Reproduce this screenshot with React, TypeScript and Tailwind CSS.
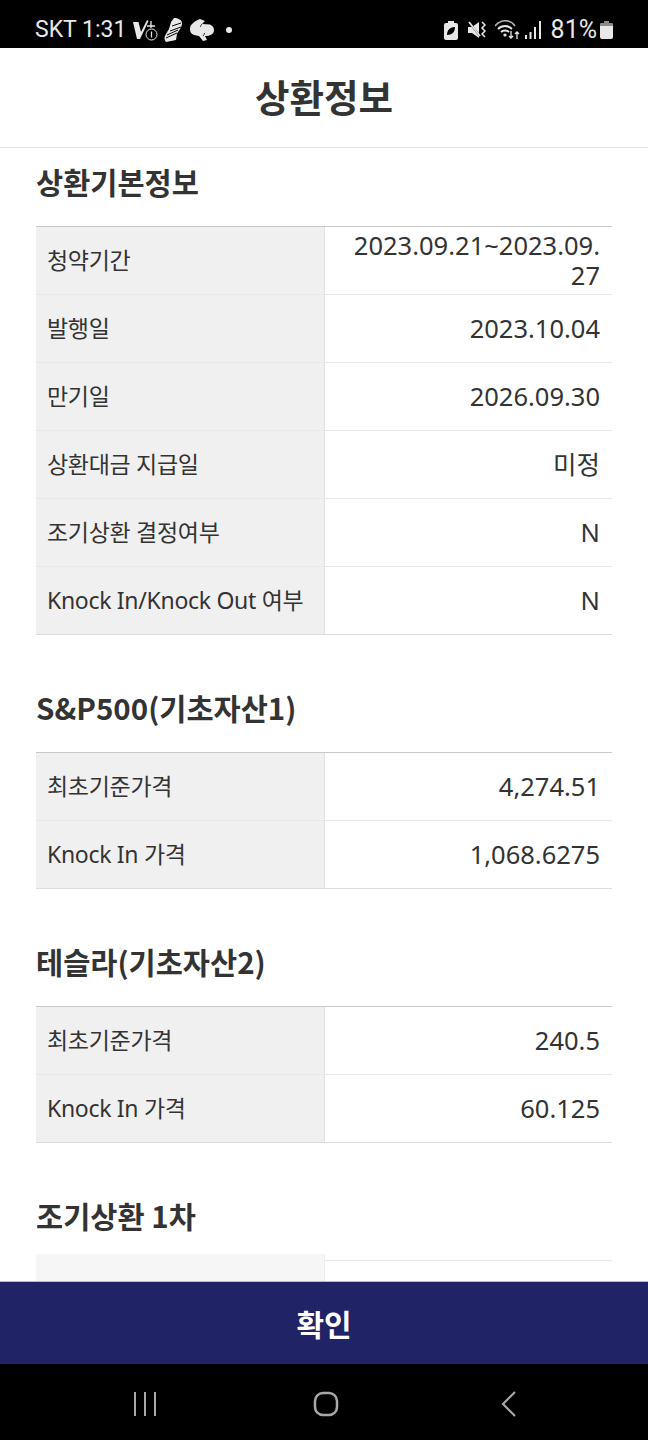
import React from 'react'

type Row = { label: string; value: string }

const basicRows: Row[] = [
  { label: '청약기간', value: '2023.09.21~2023.09.27' },
  { label: '발행일', value: '2023.10.04' },
  { label: '만기일', value: '2026.09.30' },
  { label: '상환대금 지급일', value: '미정' },
  { label: '조기상환 결정여부', value: 'N' },
  { label: 'Knock In/Knock Out 여부', value: 'N' },
]

const spRows: Row[] = [
  { label: '최초기준가격', value: '4,274.51' },
  { label: 'Knock In 가격', value: '1,068.6275' },
]

const teslaRows: Row[] = [
  { label: '최초기준가격', value: '240.5' },
  { label: 'Knock In 가격', value: '60.125' },
]

function StatusBar() {
  return (
    <div className="h-12 shrink-0 bg-black text-[#e8e8e8] flex items-center justify-between pt-[12px] pl-[35px] pr-[35px] font-['Roboto',sans-serif]">
      <div className="flex items-center text-[23px]">
        <span>SKT 1:31</span>
        {/* left notification icons */}
        <svg className="ml-[6px]" width="26" height="22" viewBox="0 0 26 22" fill="none" stroke="#e8e8e8">
          <path d="M1 3h5.500l2.500 10L15 1l1.500 1L8 20H5z" fill="#e8e8e8" stroke="none" />
          <path d="M15 7h8M19 2v7" strokeWidth="1.300" />
          <circle cx="19.500" cy="15.500" r="5.500" strokeWidth="1" fill="#000" />
          <path d="M19.500 12.500v6" strokeWidth="1.200" />
        </svg>
        <svg className="ml-[5px]" width="20" height="24" viewBox="0 0 20 24" fill="#e8e8e8">
          <path d="M11 0c4 0 8 2 8 5 0 5-4 8-5 11l-1 6-10 2c-2-2-2-5 0-8l3-5 2-7z" />
          <path d="M3 20l11-5M4 17l11-5M7 13l11-4M9 8l9-3" stroke="#000" strokeWidth="1" fill="none" />
        </svg>
        <svg className="ml-[7px]" width="24" height="22" viewBox="0 0 24 22" fill="#e8e8e8">
          <path d="M10 0l5 2-3 3 8 .5c3 1.500 4 3.500 4 5.500 0 4-4 6-9 6l2 4-4 1-4-5-5-1c-3-1-4-3-4-6 0-5 5-8 10-10z" />
          <path d="M12 5c-1 1-1.500 2-1.500 3M13 17c1-1 1.500-2 1.500-3" stroke="#000" strokeWidth="0.800" fill="none" />
        </svg>
        <span className="ml-[12px] w-[6px] h-[6px] rounded-full bg-[#e8e8e8]" />
      </div>
      <div className="flex items-center text-[25px]">
        <svg width="14" height="19" viewBox="0 0 14 19" fill="#e8e8e8">
          <path d="M4 0h6v2h2a2 2 0 0 1 2 2v13a2 2 0 0 1-2 2H2a2 2 0 0 1-2-2V4a2 2 0 0 1 2-2h2z" />
          <path d="M3 14c0-5 3-8 8-8 0 5-3 8-8 8z" fill="#000" />
        </svg>
        <svg className="ml-[10px]" width="18" height="18" viewBox="0 0 18 18" fill="#e8e8e8">
          <path d="M0 6h4l7-5v16l-7-5H0z" />
          <path d="M0 0l12 15" stroke="#000" strokeWidth="2" />
          <path d="M1 1l11 14" stroke="#e8e8e8" strokeWidth="1.800" />
          <path d="M14 1l3 3-3 3 3 3-3 3 3 3" stroke="#e8e8e8" strokeWidth="1.500" fill="none" />
        </svg>
        <svg className="ml-[9px]" width="25" height="20" viewBox="0 0 25 20" fill="none" stroke="#e8e8e8">
          <path d="M0 6c6-7 15-7 20 0" strokeWidth="1.600" stroke="#b0b0b0" />
          <path d="M3 9c4-4 10-4 14 0" strokeWidth="1.800" />
          <path d="M6 12c2-2 6-2 8 0" strokeWidth="1.800" />
          <circle cx="10" cy="15" r="1.600" fill="#e8e8e8" stroke="none" />
          <path d="M16 11v7m-2-2l2 2 2-2M22 19v-7m-2 2l2-2 2 2" strokeWidth="1.300" />
        </svg>
        <svg className="ml-[5px]" width="16" height="18" viewBox="0 0 16 18" fill="#e8e8e8">
          <rect x="0" y="14" width="2" height="4" />
          <rect x="4.500" y="11" width="2" height="7" />
          <rect x="9" y="6" width="2" height="12" />
          <rect x="14" y="0" width="2" height="18" />
        </svg>
        <span className="ml-[10px]">81%</span>
        <svg className="ml-[3px]" width="13" height="18" viewBox="0 0 13 18" fill="#e8e8e8">
          <path d="M4 0h5v2h2a2 2 0 0 1 2 2v12a2 2 0 0 1-2 2H2a2 2 0 0 1-2-2V4a2 2 0 0 1 2-2h2z" />
          <path d="M0 4a2 2 0 0 1 2-2h2V0h5v2h2a2 2 0 0 1 2 2v1H0z" fill="#8a8a8a" />
        </svg>
      </div>
    </div>
  )
}

function InfoTable({ rows }: { rows: Row[] }) {
  return (
    <div className="border-t border-b border-t-[#c8c8c8] border-b-[#dcdcdc]">
      {rows.map((row, i) => (
        <div
          key={row.label}
          className={i > 0 ? 'flex h-[68px] border-t border-[#e8e8e8]' : 'flex h-[67px]'}
        >
          <div className="w-[289px] shrink-0 bg-[#f0f0f0] border-r border-[#e2e2e2] flex items-center pl-[11px] text-[23px] tracking-[-0.3px] text-[#333]">
            {row.label}
          </div>
          <div className="flex-1 min-w-0 flex items-center justify-end pb-[2px] pl-[24px] pr-[12px] text-right text-[25.500px] leading-[30px] text-[#333] break-all">
            {row.value}
          </div>
        </div>
      ))}
    </div>
  )
}

function Section({ title, rows }: { title: string; rows: Row[] }) {
  return (
    <section className="mb-[39px]">
      <h2 className="h-[78px] pt-[13px] font-['Noto_Sans_CJK_KR',sans-serif] text-[29.500px] leading-[40px] font-bold text-[#333]">{title}</h2>
      <InfoTable rows={rows} />
    </section>
  )
}

export default function App() {
  return (
    <div className="h-[1440px] w-[648px] flex flex-col overflow-hidden bg-white font-['Noto_Sans','Noto_Sans_CJK_KR',sans-serif]">
      <StatusBar />

      <header className="h-[100px] shrink-0 border-b border-[#e4e4e4] flex items-center justify-center">
        <h1 className="font-['Noto_Sans_CJK_KR',sans-serif] text-[37.500px] font-bold text-[#333] -mt-[2px]">상환정보</h1>
      </header>

      <main className="flex-1 min-h-0 overflow-hidden px-9">
        <Section title="상환기본정보" rows={basicRows} />
        <Section title="S&P500(기초자산1)" rows={spRows} />
        <Section title="테슬라(기초자산2)" rows={teslaRows} />
        <section>
          <h2 className="h-[72px] pt-[13px] font-['Noto_Sans_CJK_KR',sans-serif] text-[29.500px] leading-[40px] font-bold text-[#333]">조기상환 1차</h2>
          <div className="flex h-[60px]">
            <div className="w-[289px] shrink-0 bg-[#f6f6f6] border-r border-[#eee]" />
            <div className="flex-1 mt-[6px] border-t border-[#e8e8e8]" />
          </div>
        </section>
      </main>

      <button className="h-[83px] shrink-0 bg-[#202365] border-t border-[#b9bad0] font-['Noto_Sans_CJK_KR',sans-serif] text-white text-[30px] font-bold">
        확인
      </button>

      <nav className="h-[76px] shrink-0 bg-black flex items-center justify-between pt-[4px] pl-[133px] pr-[131px]">
        <svg width="24" height="26" viewBox="0 0 24 26" stroke="#a8a8a8" strokeWidth="2">
          <path d="M2 1v24M12 1v24M22 1v24" />
        </svg>
        <svg className="mr-[6px]" width="26" height="26" viewBox="0 0 26 26" fill="none" stroke="#a8a8a8" strokeWidth="2.500">
          <rect x="2" y="2" width="22" height="22" rx="8" />
        </svg>
        <svg width="16" height="28" viewBox="0 0 16 28" fill="none" stroke="#a8a8a8" strokeWidth="2.200">
          <path d="M14 2L2 14l12 12" />
        </svg>
      </nav>
    </div>
  )
}
